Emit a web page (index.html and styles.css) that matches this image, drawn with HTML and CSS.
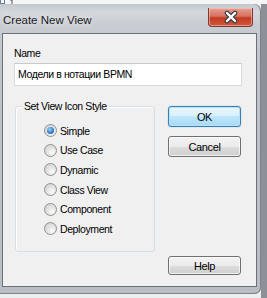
FILE: index.html
```html
<!DOCTYPE html>
<html lang="ru">
<head>
  <meta charset="UTF-8" />
  <title>Create New View</title>
  <link rel="stylesheet" href="styles.css">
</head>
<body>
  <div class="topstrip">
    <span class="topbox"></span>
    <svg class="topdigit" width="6" height="4" viewBox="0 0 6 4">
      <path d="M3 0 V4 M1 0 H3" stroke="#555" stroke-width="1" fill="none"/>
    </svg>
  </div>
  <div class="window">
    <div class="titlebar">
      <div class="title">Create New View</div>
      <div class="close-btn">
        <svg width="20" height="14" viewBox="0 0 20 14">
          <path d="M6 3 L14 11 M14 3 L6 11" stroke="#3a3f4a" stroke-width="4.6" stroke-linecap="round" fill="none"/>
          <path d="M6 3 L14 11 M14 3 L6 11" stroke="#ffffff" stroke-width="2.4" stroke-linecap="round" fill="none"/>
        </svg>
      </div>
    </div>
    <div class="client">
      <div class="name-label">Name</div>
      <div class="name-input">Модели в нотации BPMN</div>

      <div class="main-row">
        <div class="group">
          <span class="group-title">Set View Icon Style</span>
          <div class="radio-row"><span class="radio checked"></span>Simple</div>
          <div class="radio-row"><span class="radio"></span>Use Case</div>
          <div class="radio-row"><span class="radio"></span>Dynamic</div>
          <div class="radio-row"><span class="radio"></span>Class View</div>
          <div class="radio-row"><span class="radio"></span>Component</div>
          <div class="radio-row"><span class="radio"></span>Deployment</div>
        </div>
        <div class="buttons">
          <div class="btn btn-default">OK</div>
          <div class="btn">Cancel</div>
        </div>
      </div>

      <div class="footer">
        <div class="btn btn-help">Help</div>
      </div>
    </div>
  </div>
</body>
</html>
```

FILE: styles.css
```css
body {
  margin: 0;
  padding: 0;
  width: 267px;
  height: 298px;
  overflow: hidden;
  background: linear-gradient(to right, #eceff2 0, #eceff2 261px, #8d9097 261px, #8d9097 100%);
  font-family: 'Liberation Sans', Arial, sans-serif;
  font-size: 10.5px;
  letter-spacing: -0.4px;
  color: #000;
}

.topstrip {
  height: 4px;
  position: relative;
  overflow: hidden;
  background-color: #f4f5f7;
}

.topbox {
  position: absolute;
  left: 0;
  top: -4px;
  width: 3px;
  height: 6px;
  border: 1px solid #6f7d96;
}

.topdigit {
  position: absolute;
  left: 9px;
  top: 0;
}

.window {
  width: 261px;
  height: 290px;
  box-sizing: border-box;
  padding: 0 4px 7px 2px;
  border-radius: 0 7px 7px 0;
  background: linear-gradient(to bottom, #c3c8cf 0, #d4d8dd 8px, #c9cdd3 20px, #bfc3ca 60px, #b9bdc4 100%);
  box-shadow: inset -1px 0 0 #7d8188, inset 0 -1px 0 #7d8188;
}

.titlebar {
  height: 29px;
  display: flex;
  align-items: center;
  justify-content: space-between;
}

.title {
  font-size: 11.5px;
  letter-spacing: 0;
  color: #1a1a1a;
  padding-left: 1px;
  padding-top: 2px;
  text-shadow: 0 0 6px rgba(255, 255, 255, 0.9);
}

.close-btn {
  width: 45px;
  height: 19px;
  margin-right: 4px;
  margin-top: -3px;
  box-sizing: border-box;
  border: 1px solid #7c3a33;
  border-top: none;
  border-radius: 0 0 4px 4px;
  background: linear-gradient(to bottom, #e5a396 0, #d7705d 45%, #c13b22 55%, #cf5a3e 100%);
  box-shadow: inset 0 0 0 1px rgba(255, 210, 200, 0.5);
  display: flex;
  align-items: center;
  justify-content: center;
}

.client {
  height: 254px;
  box-sizing: border-box;
  border: 1px solid #6d7177;
  background-color: #f0f0f0;
  padding: 13px 0 0 11px;
}

.name-label {
  line-height: 13px;
}

.name-input {
  margin-top: 3px;
  width: 228px;
  height: 23px;
  box-sizing: border-box;
  border: 1px solid #d9dbde;
  border-top-color: #c6c9cd;
  background-color: #fff;
  padding: 0 0 0 3px;
  line-height: 21px;
}

.main-row {
  display: flex;
  margin-top: 20px;
}

.group {
  position: relative;
  margin-left: 1px;
  width: 140px;
  height: 146px;
  box-sizing: border-box;
  border: 1px solid #d5dfe5;
  border-radius: 3px;
  box-shadow: inset 1px 1px 0 #fff;
  padding: 14px 0 0 28px;
}

.group-title {
  position: absolute;
  left: 6px;
  top: -7px;
  line-height: 13px;
  padding: 0 2px;
  background-color: #f0f0f0;
}

.radio-row {
  height: 19.6px;
  display: flex;
  align-items: center;
}

.radio {
  width: 13px;
  height: 13px;
  box-sizing: border-box;
  margin-right: 3px;
  border-radius: 50%;
  border: 1px solid #8f9192;
  background: radial-gradient(circle at 65% 70%, #fbfbfb 0, #e6e6e6 40%, #cbcbcb 100%);
  position: relative;
}

.radio.checked::after {
  content: "";
  position: absolute;
  left: 2px;
  top: 2px;
  width: 7px;
  height: 7px;
  border-radius: 50%;
  background: radial-gradient(circle at 40% 35%, #a6d4f7 0, #3d8fd1 45%, #14508f 100%);
}

.buttons {
  margin-left: 13px;
  display: flex;
  flex-direction: column;
  gap: 9px;
}

.btn {
  width: 73px;
  height: 21px;
  box-sizing: border-box;
  border: 1px solid #707070;
  border-radius: 3px;
  background: linear-gradient(to bottom, #f2f2f2 0, #ebebeb 50%, #dddddd 50%, #cfcfcf 100%);
  box-shadow: inset 0 0 0 1px rgba(255, 255, 255, 0.7);
  display: flex;
  align-items: center;
  justify-content: center;
  font-size: 11px;
}

.btn-default {
  border-color: #3c7fb1;
  background: linear-gradient(to bottom, #eaf6fd 0, #d9f0fc 50%, #bee6fd 50%, #a7d9f5 100%);
  box-shadow: inset 0 0 0 1px #b6e3fb, 0 0 1px #48a8e8;
}

.footer {
  display: flex;
  margin-top: 4px;
  padding-left: 154px;
}

.btn-help {
  height: 19px;
}
```
